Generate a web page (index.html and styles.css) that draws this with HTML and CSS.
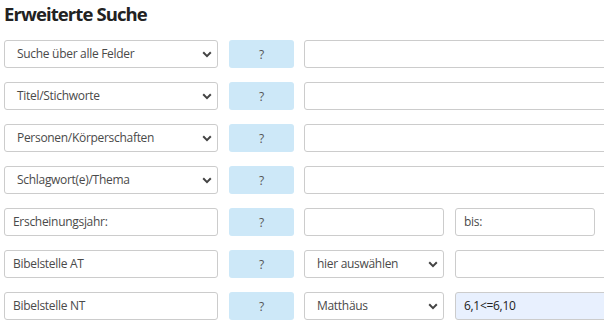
FILE: index.html
```html
<!DOCTYPE html>
<html lang="de">
<head>
    <meta charset="UTF-8">
    <title>Erweiterte Suche</title>
    <link rel="stylesheet" href="styles.css">
</head>
<body>
    <div class="search">
        <h1>Erweiterte Suche</h1>

        <div class="row">
            <div class="select field-main">Suche über alle Felder</div>
            <button class="help">?</button>
            <div class="input wide"></div>
        </div>
        <div class="row">
            <div class="select field-main">Titel/Stichworte</div>
            <button class="help">?</button>
            <div class="input wide"></div>
        </div>
        <div class="row">
            <div class="select field-main">Personen/Körperschaften</div>
            <button class="help">?</button>
            <div class="input wide"></div>
        </div>
        <div class="row">
            <div class="select field-main">Schlagwort(e)/Thema</div>
            <button class="help">?</button>
            <div class="input wide"></div>
        </div>
        <div class="row">
            <div class="input field-main">Erscheinungsjahr:</div>
            <button class="help">?</button>
            <div class="input half"></div>
            <div class="input half">bis:</div>
        </div>
        <div class="row">
            <div class="input field-main">Bibelstelle AT</div>
            <button class="help">?</button>
            <div class="select half">hier auswählen</div>
            <div class="input rest"></div>
        </div>
        <div class="row">
            <div class="input field-main">Bibelstelle NT</div>
            <button class="help">?</button>
            <div class="select half">Matthäus</div>
            <div class="input rest filled">6,1&lt;=6,10</div>
        </div>
    </div>
</body>
</html>
```

FILE: styles.css
```css
html, body {
    margin: 0;
    overflow: hidden;
}
body {
    font-family: "Open Sans", sans-serif;
    color: #333;
    background: #fff;
}
.search {
    padding: 0 0 0 4px;
    width: 700px;
}
h1 {
    font-size: 18.5px;
    font-weight: bold;
    letter-spacing: -0.9px;
    color: #222;
    margin: 0;
    padding-top: 1px;
    height: 39px;
    line-height: 26px;
}
.row {
    display: flex;
    gap: 11px;
    margin-bottom: 14px;
}
.select, .input {
    box-sizing: border-box;
    height: 28px;
    border: 1px solid #ccc;
    border-radius: 3px;
    background: #fff;
    font-size: 12px;
    letter-spacing: -0.3px;
    line-height: 26px;
    color: #4a4a4a;
    white-space: nowrap;
}
.input {
    padding: 0 8px;
}
.select {
    padding: 0 24px 0 12px;
    background-image: url("data:image/svg+xml,%3Csvg xmlns='http://www.w3.org/2000/svg' width='10' height='7' viewBox='0 0 10 7'%3E%3Cpath d='M1.2 1.3 5 5.1 8.8 1.3' fill='none' stroke='%23444' stroke-width='2'/%3E%3C/svg%3E");
    background-repeat: no-repeat;
    background-position: right 5px center;
}
.field-main {
    width: 214px;
}
.help {
    width: 65px;
    height: 28px;
    border: none;
    border-radius: 3px;
    background: #cde8f8;
    color: #555;
    font-family: "Open Sans", sans-serif;
    font-size: 12px;
    padding: 0;
    margin-right: -1px;
}
.wide {
    width: 320px;
}
.half {
    width: 140px;
}
.rest {
    width: 170px;
}
.filled {
    background: #e8f0fe;
    color: #222;
}
```
